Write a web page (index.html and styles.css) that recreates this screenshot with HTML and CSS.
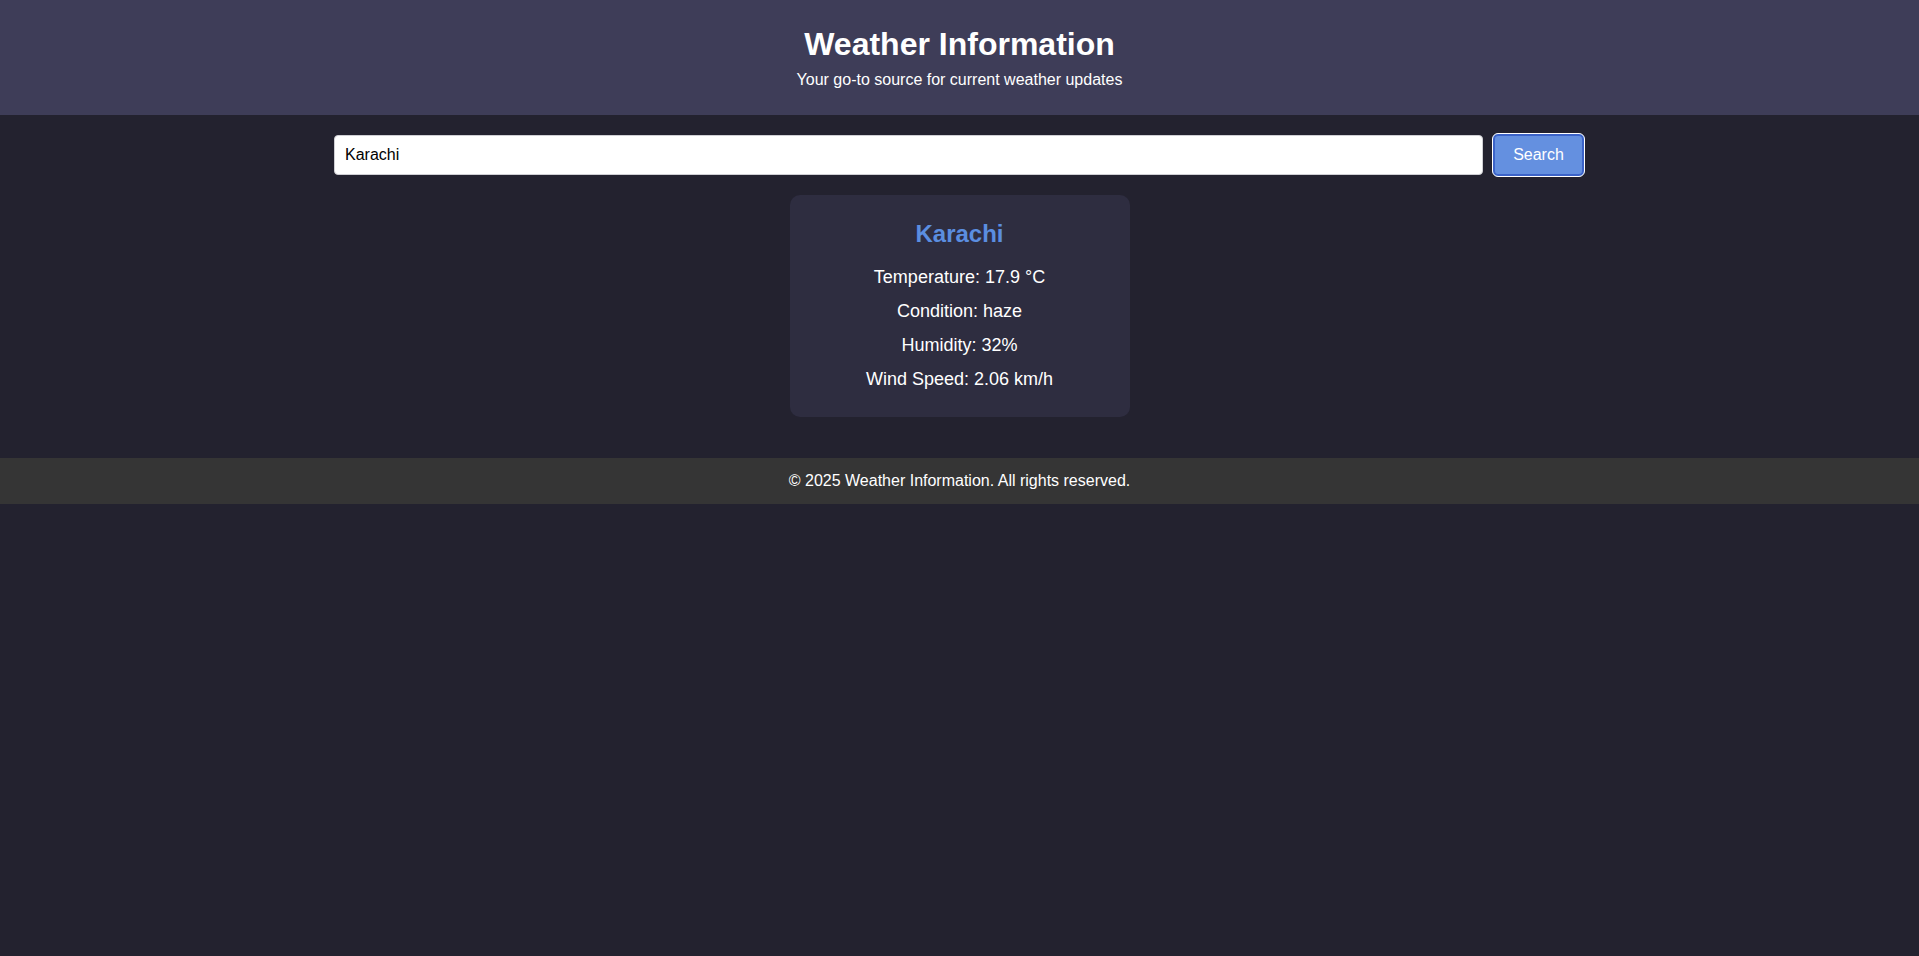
FILE: index.html
```html
<!DOCTYPE html>
<html lang="en">
<head>
<meta charset="utf-8">
<title>Weather Information</title>
<link rel="stylesheet" href="styles.css">
</head>
<body>
<header class="site-header">
  <h1 class="site-title">Weather Information</h1>
  <p class="site-tagline">Your go-to source for current weather updates</p>
</header>
<main class="content">
  <form class="search-row">
    <input class="search-input" type="text" value="Karachi">
    <button class="search-button" type="button">Search</button>
  </form>
  <section class="weather-card">
    <h2 class="city-name">Karachi</h2>
    <p class="weather-line">Temperature: 17.9 °C</p>
    <p class="weather-line">Condition: haze</p>
    <p class="weather-line">Humidity: 32%</p>
    <p class="weather-line">Wind Speed: 2.06 km/h</p>
  </section>
</main>
<footer class="site-footer">
  <p class="footer-text">© 2025 Weather Information. All rights reserved.</p>
</footer>
</body>
</html>
```

FILE: styles.css
```css
html, body {
  margin: 0;
  padding: 0;
}
body {
  background: #23222f;
  color: #ffffff;
  font-family: "Liberation Sans", Arial, Helvetica, sans-serif;
  line-height: 1.5;
  min-height: 956px;
}
.site-header {
  background: #3e3d58;
  text-align: center;
  padding: 20px 0 23px;
}
.site-title {
  margin: 0;
  font-size: 32px;
  line-height: 48px;
  font-weight: bold;
}
.site-tagline {
  margin: 0;
  font-size: 16px;
  line-height: 24px;
}
.content {
  padding: 18px 0 41px;
}
.search-row {
  display: flex;
  align-items: center;
  justify-content: center;
  gap: 9px;
  margin: 0 0 18px;
}
.search-input {
  width: 1149px;
  height: 40px;
  box-sizing: border-box;
  padding: 0 10px;
  border: 1px solid #cfcfd4;
  border-radius: 4px;
  background: #ffffff;
  color: #000000;
  font-family: "Liberation Sans", Arial, Helvetica, sans-serif;
  font-size: 16px;
  outline: none;
}
.search-button {
  width: 93px;
  height: 44px;
  box-sizing: border-box;
  border: 1px solid #ffffff;
  border-radius: 6px;
  background: #6490e0;
  box-shadow: inset 0 0 0 2px #3b63c9;
  color: #ffffff;
  font-family: "Liberation Sans", Arial, Helvetica, sans-serif;
  font-size: 16px;
  padding: 0;
  cursor: pointer;
}
.weather-card {
  width: 340px;
  box-sizing: border-box;
  margin: 0 auto;
  padding: 20px 20px 18px;
  background: #2e2d40;
  border-radius: 10px;
  text-align: center;
}
.city-name {
  margin: 0 0 10px;
  font-size: 24px;
  line-height: 38px;
  color: #5b8ee0;
}
.weather-line {
  margin: 5px 0;
  font-size: 18px;
  line-height: 29px;
}
.site-footer {
  background: #353535;
  text-align: center;
  padding: 10px 0;
}
.footer-text {
  margin: 0;
  font-size: 16px;
  line-height: 26px;
}
```
